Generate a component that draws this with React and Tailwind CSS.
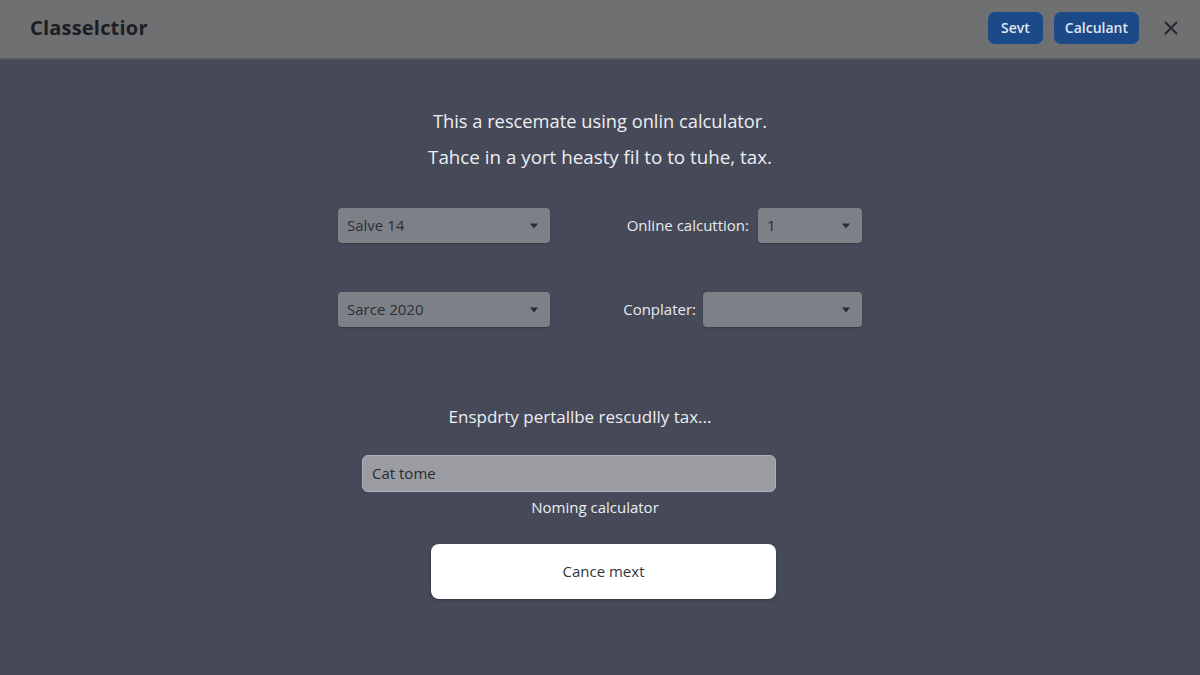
import React from "react";

const font = { fontFamily: '"Open Sans", "Noto Sans", sans-serif' };

function Caret() {
  return (
    <svg width="10" height="6" viewBox="0 0 10 6" className="shrink-0">
      <path d="M1 0.5 L9 0.5 L5 5.5 Z" fill="#2a2c33" />
    </svg>
  );
}

function Select({ value, className }) {
  return (
    <div
      className={`h-[35px] rounded-[4px] bg-[#7e8087] flex items-center justify-between pl-[9px] pr-[11px] shadow-[0_1px_2px_rgba(0,0,0,0.25)] ${className}`}
    >
      <span className="text-[15px] text-[#2c2e35]">{value}</span>
      <Caret />
    </div>
  );
}

export default function App() {
  return (
    <div style={font} className="w-[1200px] h-[675px] bg-[#464957] flex flex-col overflow-hidden">
      <header className="h-[60px] bg-[#6e7072] border-b-2 border-[#55575c] flex items-center justify-between pl-[30px] pr-[22px] pb-[3px] shrink-0">
        <h1 className="text-[20px] font-bold text-[#1c1e23] tracking-[0.2px]">Classelctior</h1>
        <div className="flex items-center">
          <button className="h-[32px] px-[13px] rounded-[7px] bg-[#1c4a88] text-[#dfe6f2] text-[14px] font-semibold">Sevt</button>
          <button className="ml-[11px] h-[32px] px-[11px] rounded-[7px] bg-[#1c4a88] text-[#dfe6f2] text-[14px] font-semibold">Calculant</button>
          <svg width="14" height="14" viewBox="0 0 14 14" className="ml-[25px]">
            <path d="M1.5 1.5 L12.5 12.5 M12.5 1.5 L1.5 12.5" stroke="#23252a" strokeWidth="1.8" strokeLinecap="round" />
          </svg>
        </div>
      </header>

      <main className="flex flex-col items-center">
        <p className="mt-[49px] text-[18.3px] text-[#eceef2] leading-[24px]">This a rescemate using onlin calculator.</p>
        <p className="mt-[12px] text-[18.8px] text-[#eceef2] leading-[24px]">Tahce in a yort heasty fil to to tuhe, tax.</p>

        <div className="mt-[39px] w-[524px] flex flex-col gap-[49px]">
          <div className="flex items-center justify-between">
            <Select value="Salve 14" className="w-[212px]" />
            <div className="flex items-center">
              <span className="text-[15px] text-[#e8eaee] mr-[9px]">Online calcuttion:</span>
              <Select value="1" className="w-[104px]" />
            </div>
          </div>
          <div className="flex items-center justify-between">
            <Select value="Sarce 2020" className="w-[212px]" />
            <div className="flex items-center">
              <span className="text-[15px] text-[#e8eaee] mr-[7px]">Conplater:</span>
              <Select value="" className="w-[159px]" />
            </div>
          </div>
        </div>

        <p className="mt-[79px] text-[17px] text-[#eceef2] leading-[22px] mr-[40px]">Enspdrty pertallbe rescudlly tax...</p>

        <div className="mt-[27px] w-[414px] h-[37px] rounded-[6px] bg-[#9b9ca2] border border-[#aab0c4] flex items-center pl-[9px] mr-[62px]">
          <span className="text-[15px] text-[#2a2c32]">Cat tome</span>
        </div>
        <p className="mt-[5px] text-[15px] text-[#eceef2] leading-[20px] mr-[10px]">Noming calculator</p>

        <button className="mt-[27px] ml-[7px] w-[345px] h-[55px] rounded-[8px] bg-white text-[15px] text-[#33353b] shadow-[0_1px_3px_rgba(0,0,0,0.3)]">
          Cance mext
        </button>
      </main>
    </div>
  );
}
